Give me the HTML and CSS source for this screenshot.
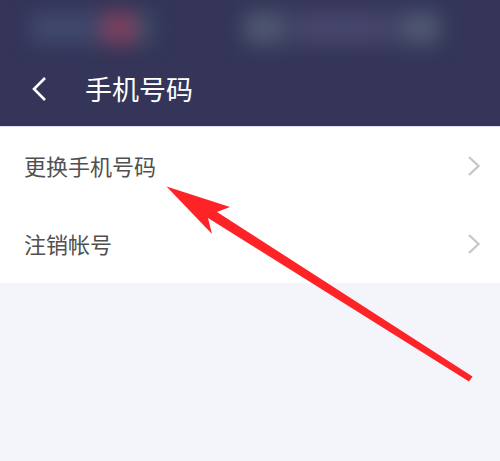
FILE: index.html
```html
<!DOCTYPE html>
<html lang="zh-CN">
<head>
    <meta charset="UTF-8">
    <meta name="viewport" content="width=device-width, initial-scale=1.0">
    <title>手机号码</title>
    <link rel="stylesheet" href="styles.css">
</head>
<body>
    <div class="page">
        <div class="header">
            <!-- blurred status bar -->
            <div class="status-bar">
                <div class="blur-group blur-left">
                    <span class="blob blob-blue"></span>
                    <span class="blob blob-red"></span>
                    <span class="blob blob-teal"></span>
                </div>
                <div class="blur-group blur-right">
                    <span class="blob blob-gray"></span>
                    <span class="blob blob-purple"></span>
                    <span class="blob blob-gray"></span>
                </div>
            </div>
            <div class="navbar">
                <svg class="back" width="18" height="28" viewBox="0 0 18 28">
                    <path d="M15 3 L4 14 L15 25" fill="none" stroke="#fff" stroke-width="2.6"/>
                </svg>
                <h1>手机号码</h1>
            </div>
        </div>

        <div class="list">
            <div class="row">
                <span>更换手机号码</span>
                <svg class="chevron" width="14" height="22" viewBox="0 0 14 22">
                    <path d="M2 2 L11.5 11 L2 20" fill="none" stroke="#c8c8c8" stroke-width="2.4"/>
                </svg>
            </div>
            <div class="row">
                <span>注销帐号</span>
                <svg class="chevron" width="14" height="22" viewBox="0 0 14 22">
                    <path d="M2 2 L11.5 11 L2 20" fill="none" stroke="#c8c8c8" stroke-width="2.4"/>
                </svg>
            </div>
        </div>

        <!-- red annotation arrow -->
        <svg class="arrow" width="500" height="461" viewBox="0 0 500 461">
            <polygon points="166.5,186.5 230,207 217,212 472.5,376.5 469,381.5 208,218 212,234" fill="#fe2327"/>
        </svg>
    </div>
</body>
</html>
```

FILE: styles.css
```css
/* General styling */
body {
    font-family: "Noto Sans CJK SC", "Liberation Sans", sans-serif;
    margin: 0;
    padding: 0;
    background-color: #f4f4fb;
}

.page {
    position: relative;
    height: 461px;
    overflow: hidden;
}

/* Header */
.header {
    background-color: #343558;
    height: 126px;
    border-bottom: 1px solid #dcdcf0;
}

.status-bar {
    height: 55px;
    display: flex;
    align-items: center;
    padding-left: 30px;
    gap: 92px;
}

.blur-group {
    display: flex;
    align-items: center;
    filter: blur(10px);
}

.blur-left {
    width: 122px;
}

.blur-right {
    width: 196px;
    justify-content: space-between;
    background-color: #424365;
    height: 34px;
}

.blob {
    display: block;
    height: 32px;
}

.blob-blue {
    width: 72px;
    background-color: #3f486c;
}

.blob-red {
    width: 34px;
    background-color: #80405f;
}

.blob-teal {
    width: 16px;
    background-color: #3d5068;
}

.blob-gray {
    width: 38px;
    background-color: #4e5872;
}

.blob-purple {
    width: 70px;
    background-color: #47476c;
}

.navbar {
    height: 71px;
    display: flex;
    align-items: center;
    padding-left: 30px;
    color: #fff;
}

.back {
    margin-right: 37px;
    margin-top: -4px;
}

.navbar h1 {
    font-size: 27px;
    font-weight: 400;
    margin: 0;
    margin-top: -4px;
}

/* List rows */
.list {
    background-color: #fff;
}

.row {
    height: 78px;
    display: flex;
    align-items: center;
    justify-content: space-between;
    padding: 0 19px 0 24px;
    font-size: 22px;
    color: #505050;
}

.row span {
    margin-top: -3px;
}

.arrow {
    position: absolute;
    left: 0;
    top: 0;
}
```
